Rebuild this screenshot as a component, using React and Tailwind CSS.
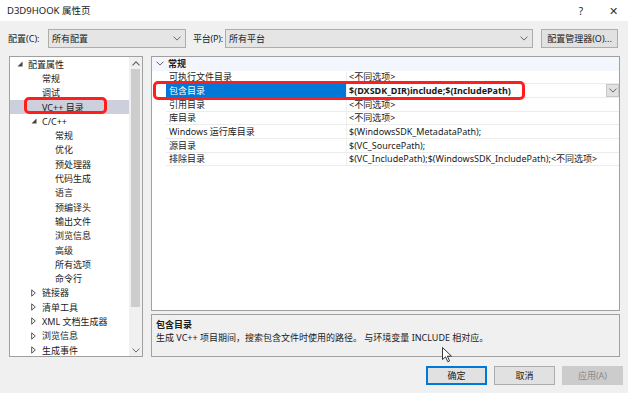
import React from "react";

const Chev = ({ className = "" }) => (
  <svg width="8" height="5" viewBox="0 0 8 5" className={className}>
    <polyline points="0.5,0.6 4,4.1 7.5,0.6" fill="none" stroke="#666" strokeWidth="1" />
  </svg>
);
const ChevUp = () => (
  <svg width="8" height="5" viewBox="0 0 8 5">
    <polyline points="0.5,4.4 4,0.9 7.5,4.4" fill="none" stroke="#606060" strokeWidth="1.1" />
  </svg>
);
const TriDown = () => (
  <svg width="6" height="6" viewBox="0 0 6 6">
    <polygon points="5.5,0.5 5.5,5.5 0.5,5.5" fill="#444" />
  </svg>
);
const TriRight = () => (
  <svg width="5" height="8" viewBox="0 0 5 8">
    <polygon points="0.7,0.8 4.3,4 0.7,7.2" fill="none" stroke="#555" strokeWidth="1" />
  </svg>
);

const tree = [
  { t: "配置属性", l: 0, ic: "down" },
  { t: "常规", l: 1 },
  { t: "调试", l: 1 },
  { t: "VC++ 目录", l: 1, sel: true },
  { t: "C/C++", l: 1, ic: "down" },
  { t: "常规", l: 2 },
  { t: "优化", l: 2 },
  { t: "预处理器", l: 2 },
  { t: "代码生成", l: 2 },
  { t: "语言", l: 2 },
  { t: "预编译头", l: 2 },
  { t: "输出文件", l: 2 },
  { t: "浏览信息", l: 2 },
  { t: "高级", l: 2 },
  { t: "所有选项", l: 2 },
  { t: "命令行", l: 2 },
  { t: "链接器", l: 1, ic: "right" },
  { t: "清单工具", l: 1, ic: "right" },
  { t: "XML 文档生成器", l: 1, ic: "right" },
  { t: "浏览信息", l: 1, ic: "right" },
  { t: "生成事件", l: 1, ic: "right" },
];

const rows = [
  ["可执行文件目录", "<不同选项>"],
  ["包含目录", "$(DXSDK_DIR)include;$(IncludePath)", true],
  ["引用目录", "<不同选项>"],
  ["库目录", "<不同选项>"],
  ["Windows 运行库目录", "$(WindowsSDK_MetadataPath);"],
  ["源目录", "$(VC_SourcePath);"],
  ["排除目录", "$(VC_IncludePath);$(WindowsSDK_IncludePath);<不同选项>"],
];

const padFor = (l) => (l === 0 ? "pl-[7px]" : l === 1 ? "pl-[21px]" : "pl-[34px]");

export default function App() {
  return (
    <div
      className="relative w-[628px] h-[393px] overflow-hidden bg-[#f0f0f0] text-[9px] text-[#1a1a1a] leading-none whitespace-nowrap"
      style={{ fontFamily: '"Noto Sans", "Noto Sans CJK SC", sans-serif' }}
    >
      {/* title bar */}
      <div className="h-[21px] bg-white flex items-center pl-[7px] pr-[10px]">
        <span className="text-[9.5px]">D3D9HOOK 属性页</span>
        <span className="ml-auto text-[10px] mr-[26px]">?</span>
        <span className="text-[11px] font-light text-[#333]">✕</span>
      </div>

      {/* config row */}
      <div className="mt-[8px] h-[19px] flex items-center pr-[10px]">
        <span className="ml-[8px] w-[40px]">配置(C):</span>
        <div className="w-[138px] h-[19px] border border-[#adadad] bg-[#e5e5e5] flex items-center pl-[3px] pr-[4px]">
          <span>所有配置</span>
          <Chev className="ml-auto" />
        </div>
        <span className="ml-[7px] tracking-[-0.2px]">平台(P):</span>
        <div className="ml-[2px] flex-1 h-[19px] border border-[#adadad] bg-[#e5e5e5] flex items-center pl-[3px] pr-[4px]">
          <span>所有平台</span>
          <Chev className="ml-auto" />
        </div>
        <div className="ml-[8px] w-[77px] h-[19px] border border-[#adadad] bg-[#e1e1e1] flex items-center justify-center">
          配置管理器(O)...
        </div>
      </div>

      {/* main */}
      <div className="mt-[8px] flex h-[301px]">
        {/* tree */}
        <div className="ml-[9px] w-[134px] h-[301px] border border-[#a0a0a0] bg-white flex">
          <div className="flex-1">
            {tree.map((it, i) => (
              <div
                key={i}
                className={`h-[14.3px] flex items-center ${padFor(it.l)} ${it.sel ? "bg-[#cdd0dc]" : ""}`}
              >
                <span className="w-[11px] flex items-center">
                  {it.ic === "down" ? <TriDown /> : it.ic === "right" ? <TriRight /> : null}
                </span>
                <span>{it.t}</span>
              </div>
            ))}
          </div>
          <div className="w-[13px] bg-[#f0f0f0] flex flex-col items-center">
            <div className="h-[12px] flex items-center">
              <ChevUp />
            </div>
            <div className="w-[9px] h-[238px] bg-[#cdcdcd]" />
            <div className="mt-auto h-[12px] flex items-center">
              <Chev />
            </div>
          </div>
        </div>

        {/* right */}
        <div className="ml-[8px] w-[469px] flex flex-col">
          <div className="h-[255px] border border-[#a0a0a0] bg-white">
            <div className="h-[13.5px] bg-[#f3f6fc] flex items-center">
              <span className="w-[15px] flex justify-center pl-[1px]">
                <Chev />
              </span>
              <span className="ml-[1px] font-bold">常规</span>
            </div>
            {rows.map(([n, v, sel], i) => (
              <div key={i} className="h-[13.7px] flex">
                <div className="w-[14px]" />
                <div
                  className={`w-[180px] flex items-center pl-[3px] border-b ${
                    sel ? "bg-[#0078d7] text-white border-[#0078d7]" : "border-[#ececec]"
                  }`}
                >
                  {n}
                </div>
                <div className="w-[1px] bg-[#f0f0f0]" />
                <div
                  className={`flex-1 flex items-center pl-[2px] border-b border-[#ececec] ${
                    sel ? "font-bold" : ""
                  }`}
                >
                  <span>{v}</span>
                  {sel && (
                    <div className="ml-auto w-[13px] h-[13px] bg-[#e1e1e1] border border-[#c8c8c8] flex items-center justify-center">
                      <Chev />
                    </div>
                  )}
                </div>
              </div>
            ))}
          </div>
          <div className="mt-[3px] h-[43px] border border-[#a0a0a0] bg-[#f0f0f0] pl-[4px] pt-[5px]">
            <div className="font-bold">包含目录</div>
            <div className="mt-[4px]">生成 VC++ 项目期间，搜索包含文件时使用的路径。 与环境变量 INCLUDE 相对应。</div>
          </div>
        </div>
      </div>

      {/* buttons */}
      <div className="mt-[9px] flex h-[19px] pl-[426px]">
        <div className="w-[61px] h-[19px] border-2 border-[#0078d7] bg-[#e1e1e1] flex items-center justify-center">
          确定
        </div>
        <div className="ml-[7px] w-[61px] h-[19px] border border-[#adadad] bg-[#e1e1e1] flex items-center justify-center">
          取消
        </div>
        <div className="ml-[7px] w-[61px] h-[19px] border border-[#cccccc] bg-[#cccccc] flex items-center justify-center text-[#8a8a8a]">
          应用(A)
        </div>
      </div>

      {/* red highlight overlays */}
      <div className="absolute left-[24px] top-[97px] w-[83px] h-[17px] border-[3px] border-[#ff1e1e] rounded-[5px]" />
      <div className="absolute left-[153px] top-[81px] w-[372px] h-[19px] border-[3px] border-[#ff1e1e] rounded-[5px]" />

      {/* mouse cursor */}
      <svg className="absolute left-[442px] top-[347px]" width="11" height="16" viewBox="0 0 11 16">
        <polygon points="0.5,0.5 0.5,12.5 3.5,9.8 5.8,14.8 7.6,14 5.4,9.2 9.5,9.2" fill="white" stroke="#222" strokeWidth="0.9" />
      </svg>
    </div>
  );
}
